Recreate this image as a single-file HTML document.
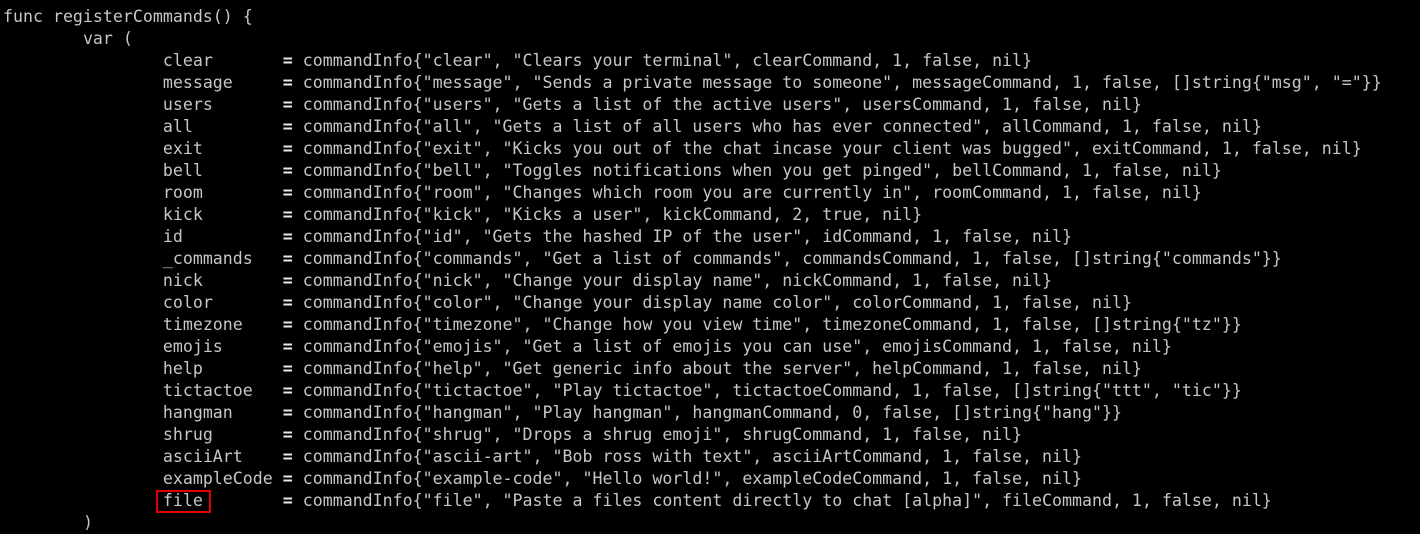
<!DOCTYPE html>
<html><head><meta charset="utf-8"><style>
html,body{margin:0;padding:0;background:#000;width:1420px;height:533px;overflow:hidden}
pre{margin:0;position:absolute;left:3px;top:6px;font-family:"DejaVu Sans Mono","Liberation Mono",monospace;font-size:16.6px;line-height:22px;color:#c6c6c6;tab-size:8;}
b{font-weight:bold;color:#e8e8e8}
.box{position:absolute;left:156px;top:490px;width:51px;height:19px;border:2px solid #e00000}
</style></head><body>
<pre>func registerCommands() {
	var (
		clear       <b>=</b> commandInfo{"clear", "Clears your terminal", clearCommand, 1, false, nil}
		message     <b>=</b> commandInfo{"message", "Sends a private message to someone", messageCommand, 1, false, []string{"msg", "="}}
		users       <b>=</b> commandInfo{"users", "Gets a list of the active users", usersCommand, 1, false, nil}
		all         <b>=</b> commandInfo{"all", "Gets a list of all users who has ever connected", allCommand, 1, false, nil}
		exit        <b>=</b> commandInfo{"exit", "Kicks you out of the chat incase your client was bugged", exitCommand, 1, false, nil}
		bell        <b>=</b> commandInfo{"bell", "Toggles notifications when you get pinged", bellCommand, 1, false, nil}
		room        <b>=</b> commandInfo{"room", "Changes which room you are currently in", roomCommand, 1, false, nil}
		kick        <b>=</b> commandInfo{"kick", "Kicks a user", kickCommand, 2, true, nil}
		id          <b>=</b> commandInfo{"id", "Gets the hashed IP of the user", idCommand, 1, false, nil}
		_commands   <b>=</b> commandInfo{"commands", "Get a list of commands", commandsCommand, 1, false, []string{"commands"}}
		nick        <b>=</b> commandInfo{"nick", "Change your display name", nickCommand, 1, false, nil}
		color       <b>=</b> commandInfo{"color", "Change your display name color", colorCommand, 1, false, nil}
		timezone    <b>=</b> commandInfo{"timezone", "Change how you view time", timezoneCommand, 1, false, []string{"tz"}}
		emojis      <b>=</b> commandInfo{"emojis", "Get a list of emojis you can use", emojisCommand, 1, false, nil}
		help        <b>=</b> commandInfo{"help", "Get generic info about the server", helpCommand, 1, false, nil}
		tictactoe   <b>=</b> commandInfo{"tictactoe", "Play tictactoe", tictactoeCommand, 1, false, []string{"ttt", "tic"}}
		hangman     <b>=</b> commandInfo{"hangman", "Play hangman", hangmanCommand, 0, false, []string{"hang"}}
		shrug       <b>=</b> commandInfo{"shrug", "Drops a shrug emoji", shrugCommand, 1, false, nil}
		asciiArt    <b>=</b> commandInfo{"ascii-art", "Bob ross with text", asciiArtCommand, 1, false, nil}
		exampleCode <b>=</b> commandInfo{"example-code", "Hello world!", exampleCodeCommand, 1, false, nil}
		file        <b>=</b> commandInfo{"file", "Paste a files content directly to chat [alpha]", fileCommand, 1, false, nil}
	)
</pre>
<div class="box"></div>
</body></html>
